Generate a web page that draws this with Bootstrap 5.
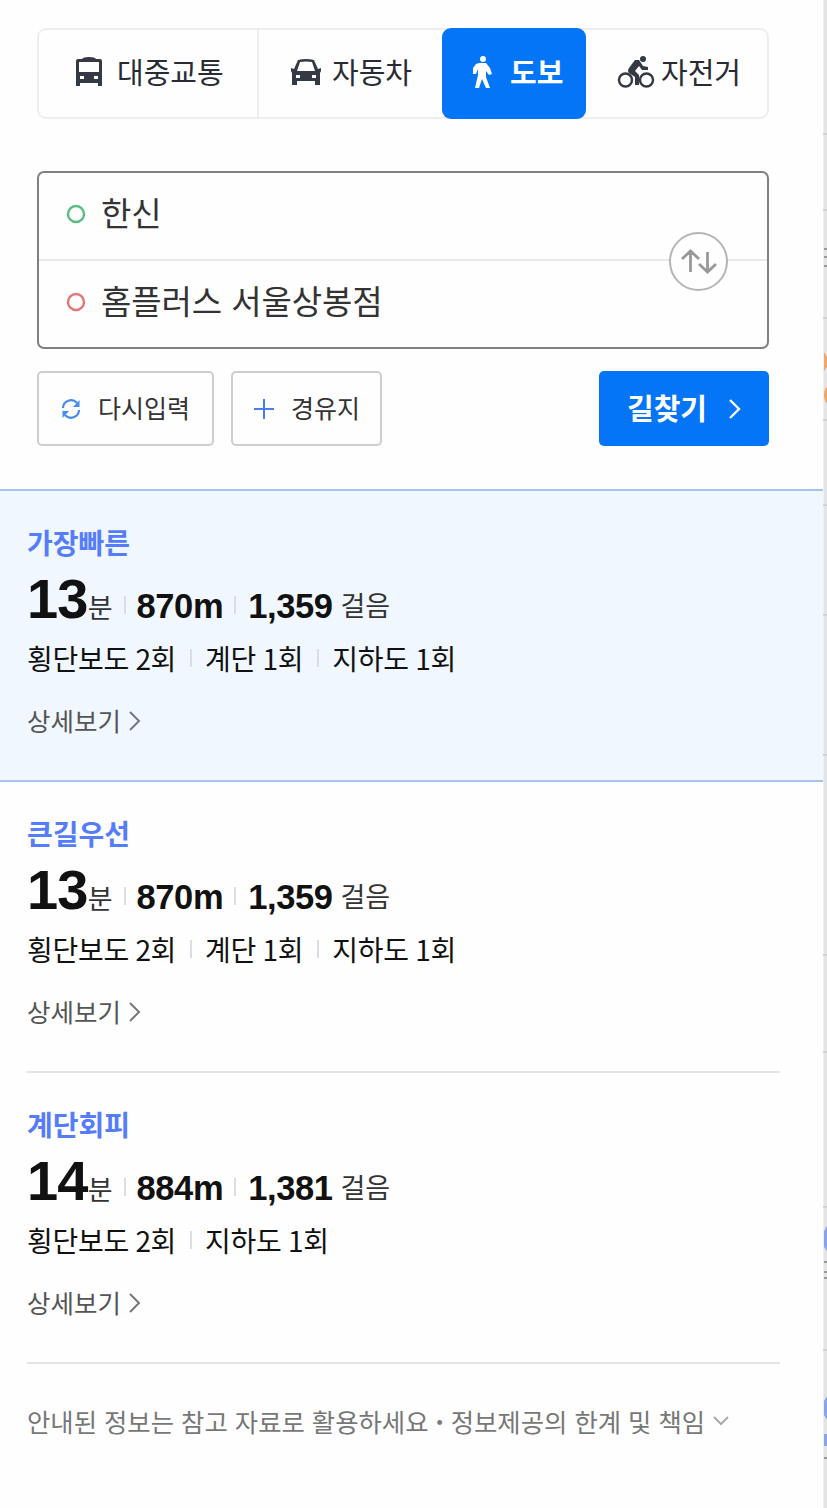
<!DOCTYPE html>
<html lang="ko">
<head>
<meta charset="utf-8">
<meta name="viewport" content="width=device-width, initial-scale=1">
<title>길찾기</title>
<link href="https://cdn.jsdelivr.net/npm/bootstrap@5.3.0/dist/css/bootstrap.min.css" rel="stylesheet">
<style>
body{font-family:"Noto Sans CJK KR",sans-serif;color:#222;background:#fefefe;height:1508px;overflow:hidden}
svg{display:block;flex:none}
.panel{width:823px;height:1508px}
.map-edge{width:4px;height:1508px}
.search-area{padding:28px 54px 0 37px;height:489px}
.modes{height:91px;border:2px solid #eeeeef;border-radius:9px}
.mode{color:#292b34;font-size:29px;line-height:40px;white-space:nowrap;height:91px;margin-top:-2px;border:0;background:none;padding:0 0 4px}
.mode span{margin-top:-2px}
.mode-bus{width:220px;padding-left:36px;height:87px;margin-top:0;border-right:2px solid #eeeeef;padding-bottom:4px}
.mode-car{width:183px;padding-left:31px}
.mode-walk{width:144px;padding-left:28px;background:#0475f7;color:#fff;border-radius:9px;font-weight:700}
.mode-bike{padding-left:31px}
.route-box{margin-top:52px;height:178px;border:2px solid #808080;border-radius:7px}
.stop{height:86px;padding:0 0 4px 27px;font-size:33px;line-height:48px;letter-spacing:-.1px;color:#333}
.stop+.stop{border-top:2px solid #e8e8e8;height:88px}
.stop span{margin:-4px 0 0 15px}
.swap{right:39px;top:59px;width:59px;height:59px;border:2px solid #b5b5b5;background:#fefefe}
.actions{margin-top:22px}
.act{height:75px;border:2px solid #cecece;border-radius:5px;background:#fefefe;font-size:25px;color:#333;padding:0;white-space:nowrap}
.act span{margin-top:-2px}
.act-reset{width:177px;padding-left:22px}
.act-via{width:151px;padding-left:21px;margin-left:17px}
.act-go{width:170px;background:#0475f7;border:0;color:#fff;font-weight:700;font-size:29px;padding-left:28px}
.result{height:291px;padding:34px 0 0 27px}
.result.selected{height:293px;background:#f0f7ff;border-top:2px solid #a5c4f0;border-bottom:2px solid #a5c4f0}
.result-name{font-size:28px;line-height:34px;font-weight:700;color:#557cfa;margin:0}
.figures{height:64px;font-size:27px;line-height:64px;color:#333;margin-top:8px;white-space:nowrap}
.figures b{font-family:"Liberation Sans",sans-serif;font-size:34.5px;letter-spacing:-.4px;color:#111}
.figures .minutes{font-size:56px;letter-spacing:-.8px}
.figures .steps{position:relative;top:-2px}
.bar{width:2px;height:18px;background:#dadde3}
.figures .bar{margin:0 12px 0 11px;align-self:center;position:relative;top:6px}
.figures .minutes+span+.bar{margin-right:11px}
.facts{font-size:28px;line-height:40px;letter-spacing:-.3px;word-spacing:-1px;color:#111;margin-top:7px;white-space:nowrap}
.facts .bar{margin:0 13.500px}
.detail{font-size:25.5px;line-height:36px;color:#555;margin-top:26px;white-space:nowrap}
.detail span{margin-top:-2px}
.rule{height:2px;background:#e5e5e5;margin:-2px 43px 0 27px;position:relative}
.notice{padding:38px 0 0 27px;font-size:25.350px;line-height:38px;color:#777;white-space:nowrap}
</style>
</head>
<body>
<div class="d-flex">
<main class="panel flex-shrink-0">
  <section class="search-area">
    <nav class="modes d-flex">
      <button class="mode mode-bus d-flex align-items-center"><svg width="28" height="32" viewBox="0 0 28 32"><path fill="#353944" fill-rule="evenodd" d="M7 3q1-2 7-2t7 2h4q2 0 2 2v25h-4v-3H5v3H1V5q0-2 2-2zM4 6v10h20V6zM5 20v3h4v-3zm14 0v3h4v-3z"/></svg><span style="margin-left:14px">대중교통</span></button>
      <button class="mode mode-car d-flex align-items-center"><svg width="32" height="28" viewBox="0 0 32 28"><path fill="#353944" fill-rule="evenodd" d="M8 2q8-2 16 0l4 9 3-1v3l-1 2v12h-5v-4H7v4H2V15l-1-2v-3l3 1zm2 2-3 9h18l-3-9q-6-1-12 0M6 17v3h4v-3zm16 0v3h4v-3z"/></svg><span style="margin-left:10px">자동차</span></button>
      <button class="mode mode-walk d-flex align-items-center"><svg width="26" height="36" viewBox="0 0 26 36"><circle cx="13" cy="5" r="3" fill="#fff"/><path fill="#fff" d="M9 9h7l4 5 2 6-3 1-3-4v6l4 11h-4l-4-9-3 9H5l3-13v-6l-2 5H3v-6l3-4z"/></svg><span style="margin-left:14px">도보</span></button>
      <button class="mode mode-bike d-flex align-items-center"><svg width="38" height="34" viewBox="0 0 38 34"><g fill="none" stroke="#353944" stroke-width="2.4"><circle cx="8.5" cy="25" r="6.5"/><circle cx="29.5" cy="25" r="6.5"/></g><circle cx="26" cy="4" r="3" fill="#353944"/><path fill="#353944" d="M18 5h4l4 6 5 1v3h-6l-3-4-4 5 4 4v10h-4v-8l-6-4q-2-2 0-5z"/></svg><span style="margin-left:6px">자전거</span></button>
    </nav>
    <div class="route-box position-relative">
      <div class="stop d-flex align-items-center"><svg width="20" height="20" viewBox="0 0 20 20"><circle cx="10" cy="10" r="8" fill="none" stroke="#5abe83" stroke-width="2.4"/></svg><span>한신</span></div>
      <div class="stop d-flex align-items-center"><svg width="20" height="20" viewBox="0 0 20 20"><circle cx="10" cy="10" r="8" fill="none" stroke="#e27775" stroke-width="2.4"/></svg><span>홈플러스 서울상봉점</span></div>
      <button class="swap position-absolute rounded-circle p-0 d-flex align-items-center justify-content-center"><svg width="38" height="28" viewBox="0 0 38 28" fill="none" stroke="#999" stroke-width="2.8"><path d="M10.5 24V4M2 11l8.5-8 8.5 8M27.500 4v20M19 16l8.500 8 8.500-8"/></svg></button>
    </div>
    <div class="actions d-flex">
      <button class="act act-reset d-flex align-items-center"><svg width="20" height="20" viewBox="0 0 20 20"><path fill="none" stroke="#468bef" stroke-width="2.2" d="M2 9a8 8 0 0 1 14-5M18 11a8 8 0 0 1-14 5"/><path fill="#468bef" d="M18.500 1v7H12zM1.500 19v-7H8z"/></svg><span style="margin-left:17px">다시입력</span></button>
      <button class="act act-via d-flex align-items-center"><svg width="20" height="20" viewBox="0 0 20 20"><path stroke="#4a7df0" stroke-width="2" d="M10 0v20M0 10h20"/></svg><span style="margin-left:17px">경유지</span></button>
      <button class="act act-go d-flex align-items-center ms-auto"><span>길찾기</span><svg style="margin-left:21px" width="14" height="20" viewBox="0 0 14 20"><path fill="none" stroke="#fff" stroke-width="2.400" d="m2 1 9 9-9 9"/></svg></button>
    </div>
  </section>

  <section class="result selected">
    <h2 class="result-name">가장빠른</h2>
    <div class="figures d-flex align-items-baseline"><b class="minutes">13</b><span>분</span><i class="bar"></i><b>870m</b><i class="bar"></i><b>1,359</b><span class="steps ms-2">걸음</span></div>
    <div class="facts d-flex align-items-center"><span>횡단보도 2회</span><i class="bar"></i><span>계단 1회</span><i class="bar"></i><span>지하도 1회</span></div>
    <div class="detail d-flex align-items-center"><span>상세보기</span><svg class="ms-2" width="12" height="20" viewBox="0 0 12 20"><path fill="none" stroke="#777" stroke-width="2" d="m1 1 9 9-9 9"/></svg></div>
  </section>
  <section class="result">
    <h2 class="result-name">큰길우선</h2>
    <div class="figures d-flex align-items-baseline"><b class="minutes">13</b><span>분</span><i class="bar"></i><b>870m</b><i class="bar"></i><b>1,359</b><span class="steps ms-2">걸음</span></div>
    <div class="facts d-flex align-items-center"><span>횡단보도 2회</span><i class="bar"></i><span>계단 1회</span><i class="bar"></i><span>지하도 1회</span></div>
    <div class="detail d-flex align-items-center"><span>상세보기</span><svg class="ms-2" width="12" height="20" viewBox="0 0 12 20"><path fill="none" stroke="#777" stroke-width="2" d="m1 1 9 9-9 9"/></svg></div>
  </section>
  <div class="rule"></div>
  <section class="result">
    <h2 class="result-name">계단회피</h2>
    <div class="figures d-flex align-items-baseline"><b class="minutes">14</b><span>분</span><i class="bar"></i><b>884m</b><i class="bar"></i><b>1,381</b><span class="steps ms-2">걸음</span></div>
    <div class="facts d-flex align-items-center"><span>횡단보도 2회</span><i class="bar"></i><span>지하도 1회</span></div>
    <div class="detail d-flex align-items-center"><span>상세보기</span><svg class="ms-2" width="12" height="20" viewBox="0 0 12 20"><path fill="none" stroke="#777" stroke-width="2" d="m1 1 9 9-9 9"/></svg></div>
  </section>
  <div class="rule"></div>
  <footer class="notice d-flex align-items-center"><span>안내된 정보는 참고 자료로 활용하세요</span><span class="fw-bold" style="margin:0 7px">·</span><span>정보제공의 한계 및 책임</span><svg class="ms-2" width="16" height="10" viewBox="0 0 16 10"><path fill="none" stroke="#aaa" stroke-width="2" d="m1 1 7 7 7-7"/></svg></footer>
</main>
<svg class="map-edge" viewBox="0 0 4 1508"><path fill="#e4e4e5" d="M0 0h4v1508H0z"/><path fill="#f0f0f0" d="M0 0h1v1508H0z"/><path stroke="#ccc" stroke-width="1.500" d="M0 134h4M0 210h4M0 318h4M0 420h4M0 505h4M0 615h4M0 755h4M0 955h4M0 1052h4M0 1207h4M0 1350h4"/><path stroke="#999" stroke-width="2" d="M1 249h3M1 257h3M1 266h3M1 1262h3M1 1272h3M1 1278h3M1 1458h3"/><path fill="#eca76c" d="M1 352l3 5v10l-3 4zM4 387q-3 2-3 8t3 8z"/><path fill="#87a5e2" d="M4 1226l-3 5v16l3 4zM4 1396l-3 5v14l3 5zM1 1434h3v12H1z"/></svg>
</div>
<script src="https://cdn.jsdelivr.net/npm/bootstrap@5.3.0/dist/js/bootstrap.bundle.min.js"></script>
</body>
</html>
